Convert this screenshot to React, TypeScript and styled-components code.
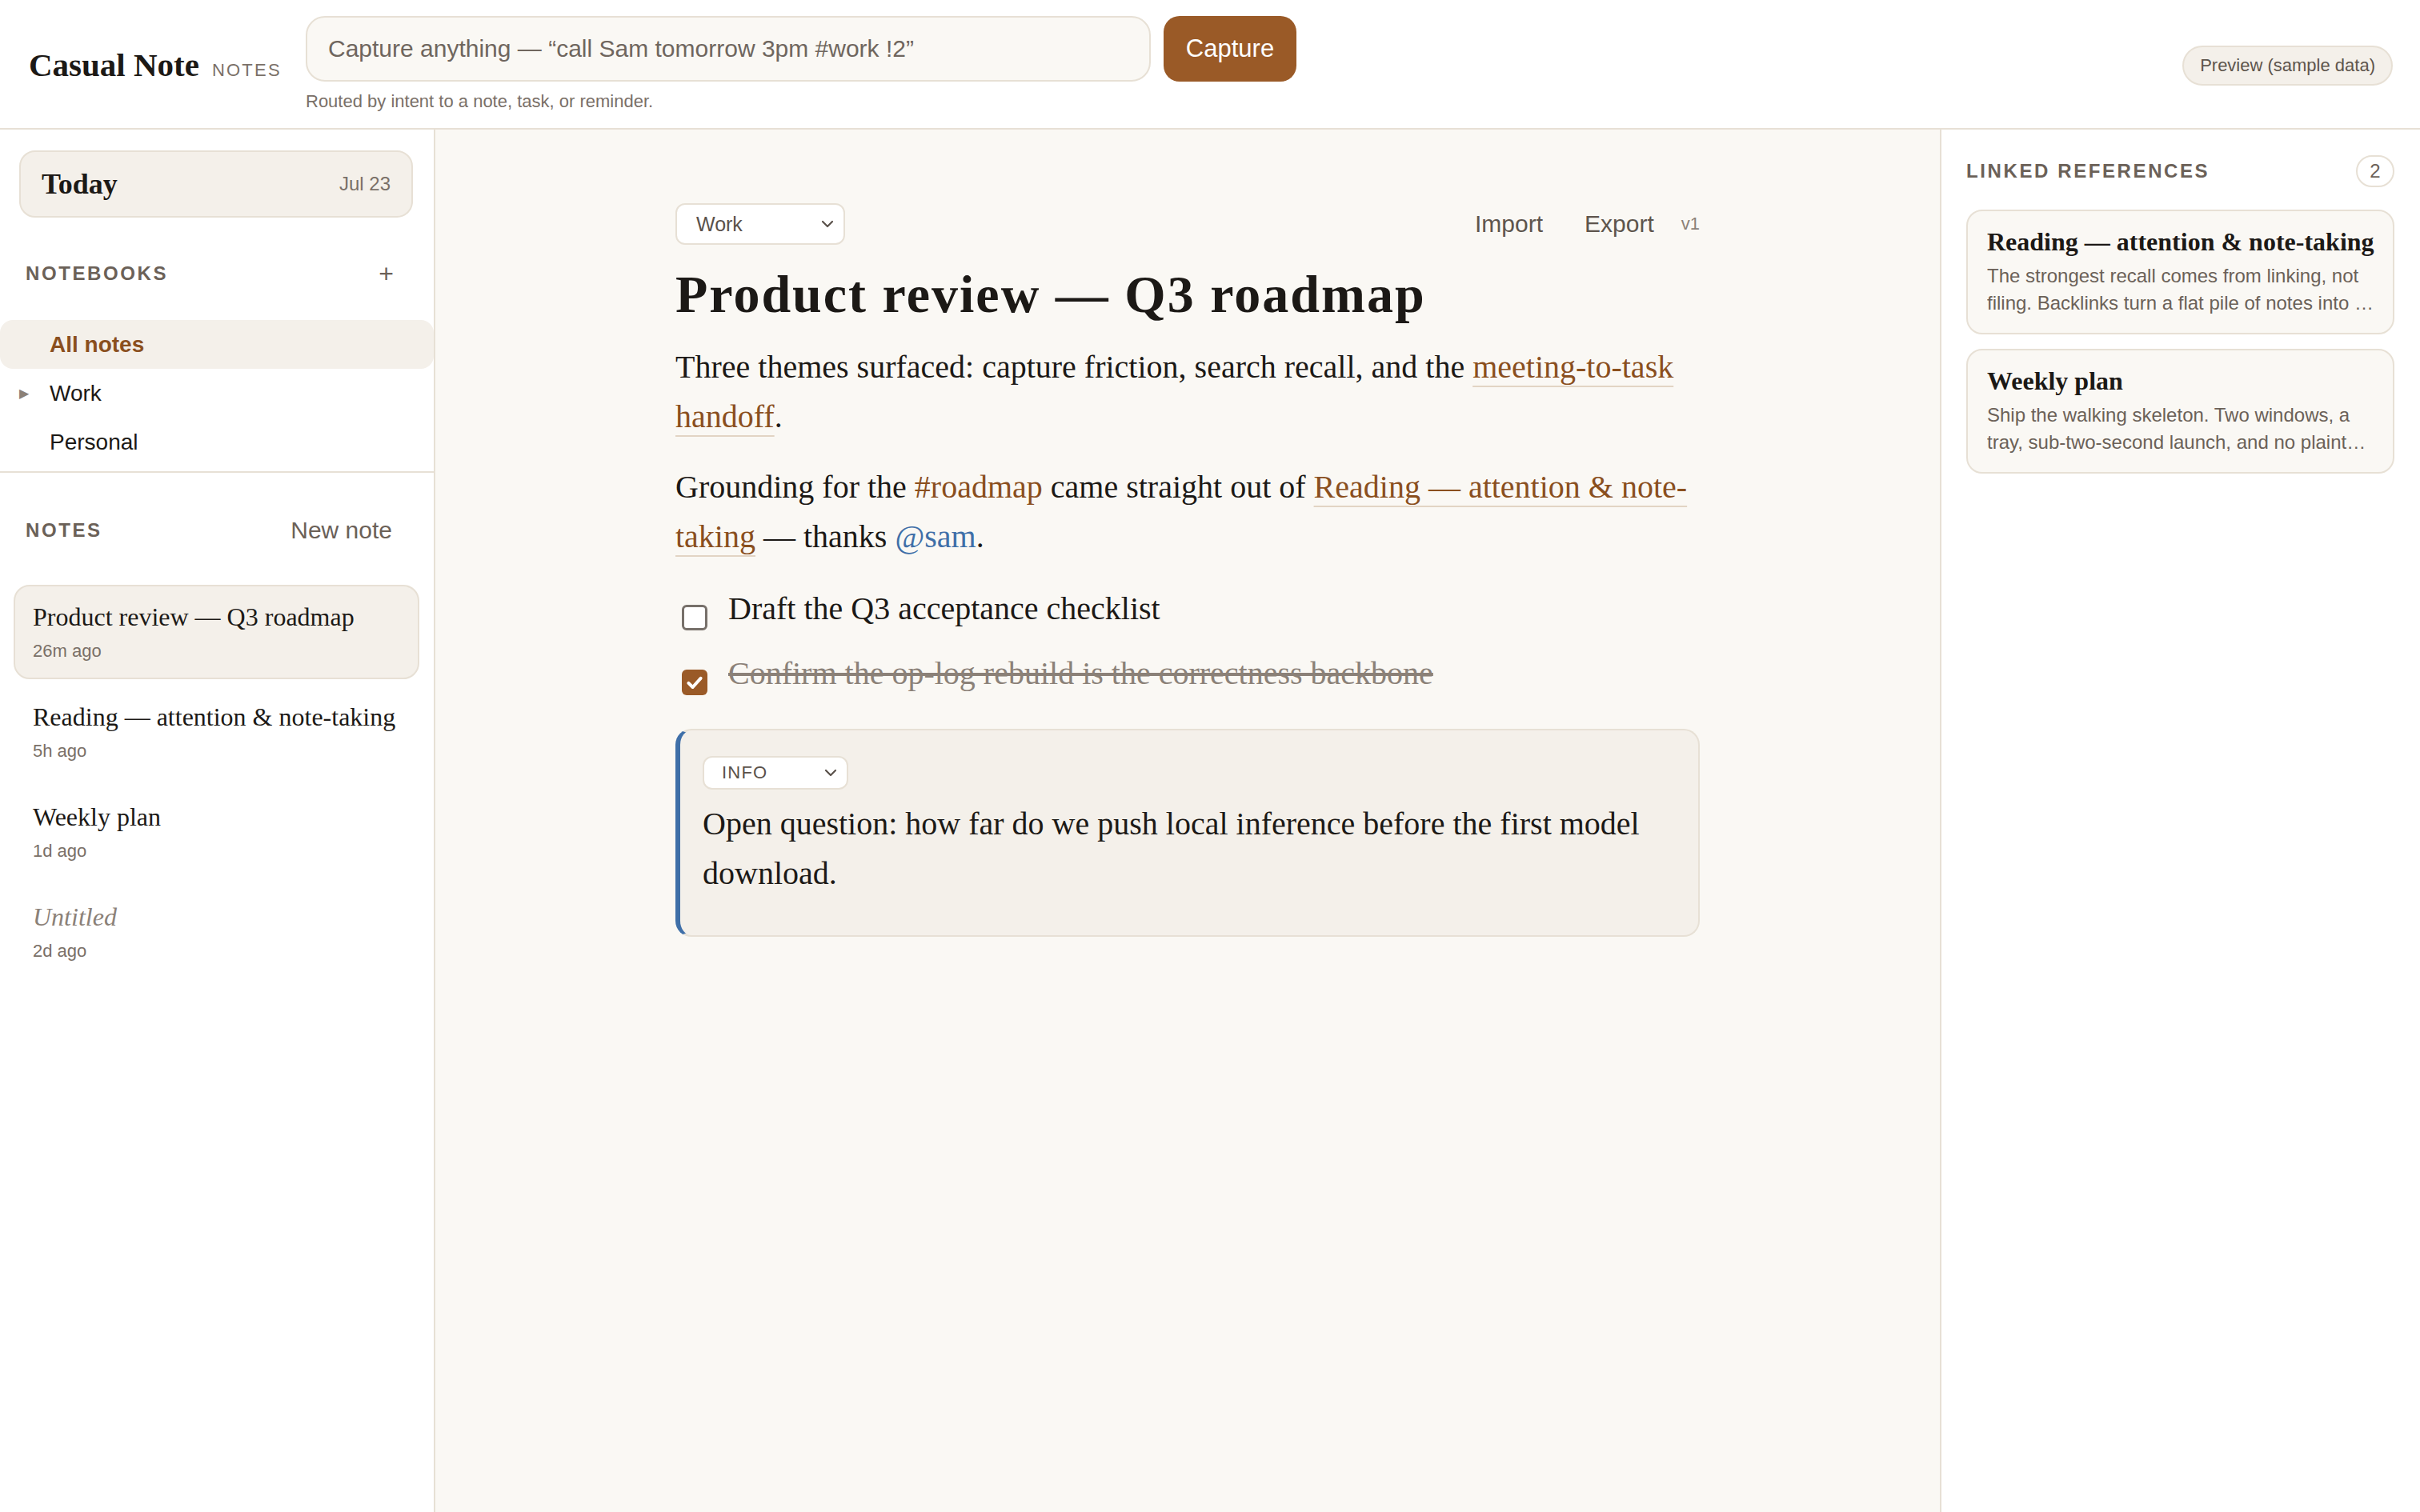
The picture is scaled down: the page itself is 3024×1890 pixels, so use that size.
import * as React from "react";
import styled, { createGlobalStyle, css } from "styled-components";

const serif = `"Liberation Serif", "Times New Roman", serif`;
const sans = `"Liberation Sans", Arial, sans-serif`;

const line = "#e7e0d5";
const soft = "#f4f0ea";
const paper = "#faf8f4";
const brown = "#9a5a27";
const linkBrown = "#8a4f1e";
const ink = "#1c1916";
const muted = "#7a7068";

const GlobalStyle = createGlobalStyle`
  html, body {
    margin: 0;
    padding: 0;
    background: #ffffff;
  }

  body {
    font-family: ${sans};
    color: ${ink};
  }

  * {
    box-sizing: border-box;
  }
`;

// The reference was taken at 2x, so the whole page is laid out in CSS px and zoomed.
const Shell = styled.div`
  zoom: 2;
  width: 1512px;
  height: 945px;
  display: grid;
  grid-template-rows: 81px 1fr;
  overflow: hidden;
  background: #ffffff;
`;

const Header = styled.header`
  display: flex;
  align-items: center;
  padding: 0 17px 0 18px;
  border-bottom: 1px solid ${line};
`;

const Brand = styled.div`
  flex: none;
  width: 155px;
  display: flex;
  align-items: baseline;
  gap: 8px;
  margin-top: 1px;
  white-space: nowrap;
`;

const BrandName = styled.span`
  font-family: ${serif};
  font-weight: 700;
  font-size: 20.5px;
  color: ${ink};
`;

const BrandTag = styled.span`
  font-size: 11px;
  letter-spacing: 1.1px;
  color: ${muted};
`;

const CaptureArea = styled.div`
  margin-left: 18px;
  display: flex;
  flex-direction: column;
  gap: 6px;
`;

const CaptureRow = styled.div`
  display: flex;
  gap: 8px;
`;

const CaptureInput = styled.div`
  width: 528px;
  height: 41px;
  display: flex;
  align-items: center;
  padding: 0 13px;
  border: 1px solid ${line};
  border-radius: 12px;
  background: ${paper};
  font-size: 15px;
  color: #6f665e;
`;

const CaptureButton = styled.button`
  width: 83px;
  height: 41px;
  border: none;
  border-radius: 10px;
  background: ${brown};
  color: #ffffff;
  font-family: ${sans};
  font-size: 15.5px;
`;

const Helper = styled.div`
  font-size: 11px;
  color: ${muted};
`;

const PreviewPill = styled.div`
  margin-left: auto;
  margin-top: 2px;
  height: 25px;
  display: flex;
  align-items: center;
  padding: 0 10px;
  border: 1px solid ${line};
  border-radius: 13px;
  background: ${soft};
  font-size: 11px;
  color: #5e554d;
`;

const Body = styled.div`
  display: grid;
  grid-template-columns: 272px 1fr 300px;
  min-height: 0;
`;

const Sidebar = styled.aside`
  border-right: 1px solid ${line};
  display: flex;
  flex-direction: column;
`;

const TodayCard = styled.div`
  margin: 13px 13px 0 12px;
  height: 42px;
  display: flex;
  align-items: center;
  justify-content: space-between;
  padding: 0 13px;
  border: 1px solid ${line};
  border-radius: 10px;
  background: ${soft};
`;

const TodayLabel = styled.span`
  font-family: ${serif};
  font-weight: 700;
  font-size: 18px;
`;

const TodayDate = styled.span`
  font-size: 12px;
  color: ${muted};
`;

const SectionHead = styled.div<{ $top: number }>`
  margin-top: ${(p) => p.$top}px;
  height: 28px;
  display: flex;
  align-items: center;
  justify-content: space-between;
  padding: 0 26px 0 16px;
`;

const SectionLabel = styled.span`
  font-size: 12px;
  font-weight: 700;
  letter-spacing: 1.3px;
  color: #6b6158;
`;

const PlusButton = styled.span`
  font-size: 16px;
  color: #6b6158;
  margin-right: -1px;
`;

const NewNote = styled.span`
  font-size: 15px;
  color: #6b6158;
`;

const NotebookList = styled.div`
  margin-top: 15px;
  padding-bottom: 3px;
  border-bottom: 1px solid ${line};
  display: flex;
  flex-direction: column;
`;

const NotebookRow = styled.div<{ $active?: boolean }>`
  position: relative;
  height: 30.5px;
  display: flex;
  align-items: center;
  padding-left: 31px;
  border-radius: 8px;
  font-size: 14px;
  color: ${ink};
  ${(p) =>
    p.$active &&
    css`
      background: ${soft};
      color: ${linkBrown};
      font-weight: 700;
    `}
`;

const Caret = styled.span`
  position: absolute;
  left: 12px;
  font-size: 8px;
  color: #8b8178;
`;

const NoteList = styled.div`
  margin-top: 20px;
  display: flex;
  flex-direction: column;
  gap: 3.5px;
`;

const NoteItem = styled.div<{ $active?: boolean }>`
  margin: 0 9px 0 8.5px;
  height: 59px;
  display: flex;
  flex-direction: column;
  gap: 4px;
  padding: 9px 11px 0;
  border: 1px solid ${(p) => (p.$active ? line : "transparent")};
  border-radius: 10px;
  background: ${(p) => (p.$active ? soft : "transparent")};
`;

const NoteTitle = styled.div<{ $untitled?: boolean }>`
  font-family: ${serif};
  font-size: 16px;
  line-height: 20px;
  color: ${(p) => (p.$untitled ? "#8b8178" : ink)};
  font-style: ${(p) => (p.$untitled ? "italic" : "normal")};
  white-space: nowrap;
`;

const NoteTime = styled.div`
  font-size: 11px;
  line-height: 15px;
  color: ${muted};
`;

const Main = styled.main`
  background: ${paper};
  overflow: hidden;
`;

const Doc = styled.article`
  width: 640px;
  margin: 0 auto;
  padding-top: 46px;
`;

const Toolbar = styled.div`
  height: 26px;
  display: flex;
  align-items: center;
`;

const SelectBox = styled.div<{ $w: number; $h: number; $caps?: boolean }>`
  width: ${(p) => p.$w}px;
  height: ${(p) => p.$h}px;
  display: flex;
  align-items: center;
  justify-content: space-between;
  padding: 0 5px 0 ${(p) => (p.$caps ? 11 : 12)}px;
  border: 1px solid ${line};
  border-radius: 6px;
  background: #ffffff;
  font-size: ${(p) => (p.$caps ? 11 : 12.5)}px;
  letter-spacing: ${(p) => (p.$caps ? 0.6 : 0)}px;
  color: #5a514a;
`;

const ToolActions = styled.div`
  margin-left: auto;
  display: flex;
  align-items: center;
`;

const ToolLink = styled.span<{ $gap: number }>`
  font-size: 15px;
  color: #5e554d;
  margin-right: ${(p) => p.$gap}px;
`;

const Version = styled.span`
  font-size: 11px;
  color: #8b8178;
`;

const Title = styled.h1`
  margin: 12px 0 0;
  font-family: ${serif};
  font-weight: 700;
  font-size: 33px;
  line-height: 38px;
  letter-spacing: 1px;
  color: ${ink};
`;

const Para = styled.p<{ $top: number }>`
  margin: ${(p) => p.$top}px 0 0;
  font-family: ${serif};
  font-size: 20px;
  line-height: 31px;
  color: ${ink};
`;

const NoteLink = styled.span`
  color: ${linkBrown};
  text-decoration: underline;
  text-decoration-color: #e2d4c4;
  text-decoration-thickness: 1px;
  text-underline-offset: 5px;
`;

const Tag = styled.span`
  color: ${linkBrown};
`;

const Mention = styled.span`
  color: #3f6fa8;
`;

const Checklist = styled.div`
  margin-top: 14px;
  display: flex;
  flex-direction: column;
  gap: 9.5px;
`;

const CheckItem = styled.div`
  display: flex;
  align-items: flex-start;
  gap: 13px;
  padding-left: 4px;
`;

const Box = styled.span<{ $checked?: boolean }>`
  flex: none;
  margin-top: 13px;
  width: 16px;
  height: 16px;
  display: flex;
  align-items: center;
  justify-content: center;
  border-radius: 3px;
  border: ${(p) => (p.$checked ? "none" : "1.5px solid #77706a")};
  background: ${(p) => (p.$checked ? brown : "#ffffff")};
`;

const CheckText = styled.span<{ $done?: boolean }>`
  font-family: ${serif};
  font-size: 20px;
  line-height: 31px;
  color: ${(p) => (p.$done ? "#8b8178" : ink)};
  text-decoration: ${(p) => (p.$done ? "line-through" : "none")};
`;

const Callout = styled.div`
  margin-top: 19px;
  padding: 16px 16px 23px 14px;
  border: 1px solid ${line};
  border-left: 3px solid #3f6fa8;
  border-radius: 10px;
  background: ${soft};
`;

const CalloutText = styled.p`
  margin: 6px 0 0;
  font-family: ${serif};
  font-size: 20px;
  line-height: 31px;
  color: ${ink};
`;

const RightPanel = styled.aside`
  border-left: 1px solid ${line};
  padding: 16px 16px 0 15.5px;
  display: flex;
  flex-direction: column;
`;

const PanelHead = styled.div`
  height: 20px;
  display: flex;
  align-items: center;
  justify-content: space-between;
`;

const CountBadge = styled.span`
  width: 24px;
  height: 20px;
  display: flex;
  align-items: center;
  justify-content: center;
  border: 1px solid ${line};
  border-radius: 10px;
  font-size: 12px;
  color: #6b6158;
`;

const RefList = styled.div`
  margin-top: 14px;
  display: flex;
  flex-direction: column;
  gap: 9px;
`;

const RefCard = styled.div`
  padding: 9px 11px 10px 12px;
  border: 1px solid ${line};
  border-radius: 10px;
  background: ${paper};
`;

const RefTitle = styled.div`
  font-family: ${serif};
  font-weight: 700;
  font-size: 16px;
  line-height: 20px;
  white-space: nowrap;
  color: ${ink};
`;

const RefSnippet = styled.div`
  margin-top: 3px;
  font-size: 12px;
  line-height: 17px;
  color: #6b6158;
  display: -webkit-box;
  -webkit-line-clamp: 2;
  -webkit-box-orient: vertical;
  overflow: hidden;
`;

function Chevron() {
  return (
    <svg width="10" height="10" viewBox="0 0 10 10" fill="none">
      <path d="M2 3.5l3 3 3-3" stroke="#5a514a" strokeWidth="1.1" strokeLinecap="round" strokeLinejoin="round" />
    </svg>
  );
}

function Check() {
  return (
    <svg width="12" height="12" viewBox="0 0 12 12" fill="none">
      <path d="M2.2 6.4l2.6 2.6 5-5.6" stroke="#ffffff" strokeWidth="2" strokeLinecap="round" strokeLinejoin="round" />
    </svg>
  );
}

const notes = [
  { title: "Product review — Q3 roadmap", time: "26m ago", active: true },
  { title: "Reading — attention & note-taking", time: "5h ago" },
  { title: "Weekly plan", time: "1d ago" },
  { title: "Untitled", time: "2d ago", untitled: true },
];

const refs = [
  {
    title: "Reading — attention & note-taking",
    text: "The strongest recall comes from linking, not filing. Backlinks turn a flat pile of notes into a web you can walk back through.",
  },
  {
    title: "Weekly plan",
    text: "Ship the walking skeleton. Two windows, a tray, sub-two-second launch, and no plaintext on disk by Friday.",
  },
];

export default function App() {
  return (
    <>
      <GlobalStyle />
      <Shell>
        <Header>
          <Brand>
            <BrandName>Casual Note</BrandName>
            <BrandTag>NOTES</BrandTag>
          </Brand>
          <CaptureArea>
            <CaptureRow>
              <CaptureInput>Capture anything — “call Sam tomorrow 3pm #work !2”</CaptureInput>
              <CaptureButton>Capture</CaptureButton>
            </CaptureRow>
            <Helper>Routed by intent to a note, task, or reminder.</Helper>
          </CaptureArea>
          <PreviewPill>Preview (sample data)</PreviewPill>
        </Header>

        <Body>
          <Sidebar>
            <TodayCard>
              <TodayLabel>Today</TodayLabel>
              <TodayDate>Jul 23</TodayDate>
            </TodayCard>

            <SectionHead $top={21}>
              <SectionLabel>NOTEBOOKS</SectionLabel>
              <PlusButton>+</PlusButton>
            </SectionHead>
            <NotebookList>
              <NotebookRow $active>All notes</NotebookRow>
              <NotebookRow>
                <Caret>▶</Caret>
                Work
              </NotebookRow>
              <NotebookRow>Personal</NotebookRow>
            </NotebookList>

            <SectionHead $top={22}>
              <SectionLabel>NOTES</SectionLabel>
              <NewNote>New note</NewNote>
            </SectionHead>
            <NoteList>
              {notes.map((n) => (
                <NoteItem key={n.title} $active={n.active}>
                  <NoteTitle $untitled={n.untitled}>{n.title}</NoteTitle>
                  <NoteTime>{n.time}</NoteTime>
                </NoteItem>
              ))}
            </NoteList>
          </Sidebar>

          <Main>
            <Doc>
              <Toolbar>
                <SelectBox $w={106} $h={26}>
                  Work
                  <Chevron />
                </SelectBox>
                <ToolActions>
                  <ToolLink $gap={26}>Import</ToolLink>
                  <ToolLink $gap={17}>Export</ToolLink>
                  <Version>v1</Version>
                </ToolActions>
              </Toolbar>

              <Title>Product review — Q3 roadmap</Title>

              <Para $top={11}>
                Three themes surfaced: capture friction, search recall, and the{" "}
                <NoteLink>meeting-to-task handoff</NoteLink>.
              </Para>
              <Para $top={13}>
                Grounding for the <Tag>#roadmap</Tag> came straight out of{" "}
                <NoteLink>Reading — attention &amp; note-taking</NoteLink> — thanks{" "}
                <Mention>@sam</Mention>.
              </Para>

              <Checklist>
                <CheckItem>
                  <Box />
                  <CheckText>Draft the Q3 acceptance checklist</CheckText>
                </CheckItem>
                <CheckItem>
                  <Box $checked>
                    <Check />
                  </Box>
                  <CheckText $done>Confirm the op-log rebuild is the correctness backbone</CheckText>
                </CheckItem>
              </Checklist>

              <Callout>
                <SelectBox $w={91} $h={21} $caps>
                  INFO
                  <Chevron />
                </SelectBox>
                <CalloutText>
                  Open question: how far do we push local inference before the first model download.
                </CalloutText>
              </Callout>
            </Doc>
          </Main>

          <RightPanel>
            <PanelHead>
              <SectionLabel>LINKED REFERENCES</SectionLabel>
              <CountBadge>2</CountBadge>
            </PanelHead>
            <RefList>
              {refs.map((r) => (
                <RefCard key={r.title}>
                  <RefTitle>{r.title}</RefTitle>
                  <RefSnippet>{r.text}</RefSnippet>
                </RefCard>
              ))}
            </RefList>
          </RightPanel>
        </Body>
      </Shell>
    </>
  );
}
